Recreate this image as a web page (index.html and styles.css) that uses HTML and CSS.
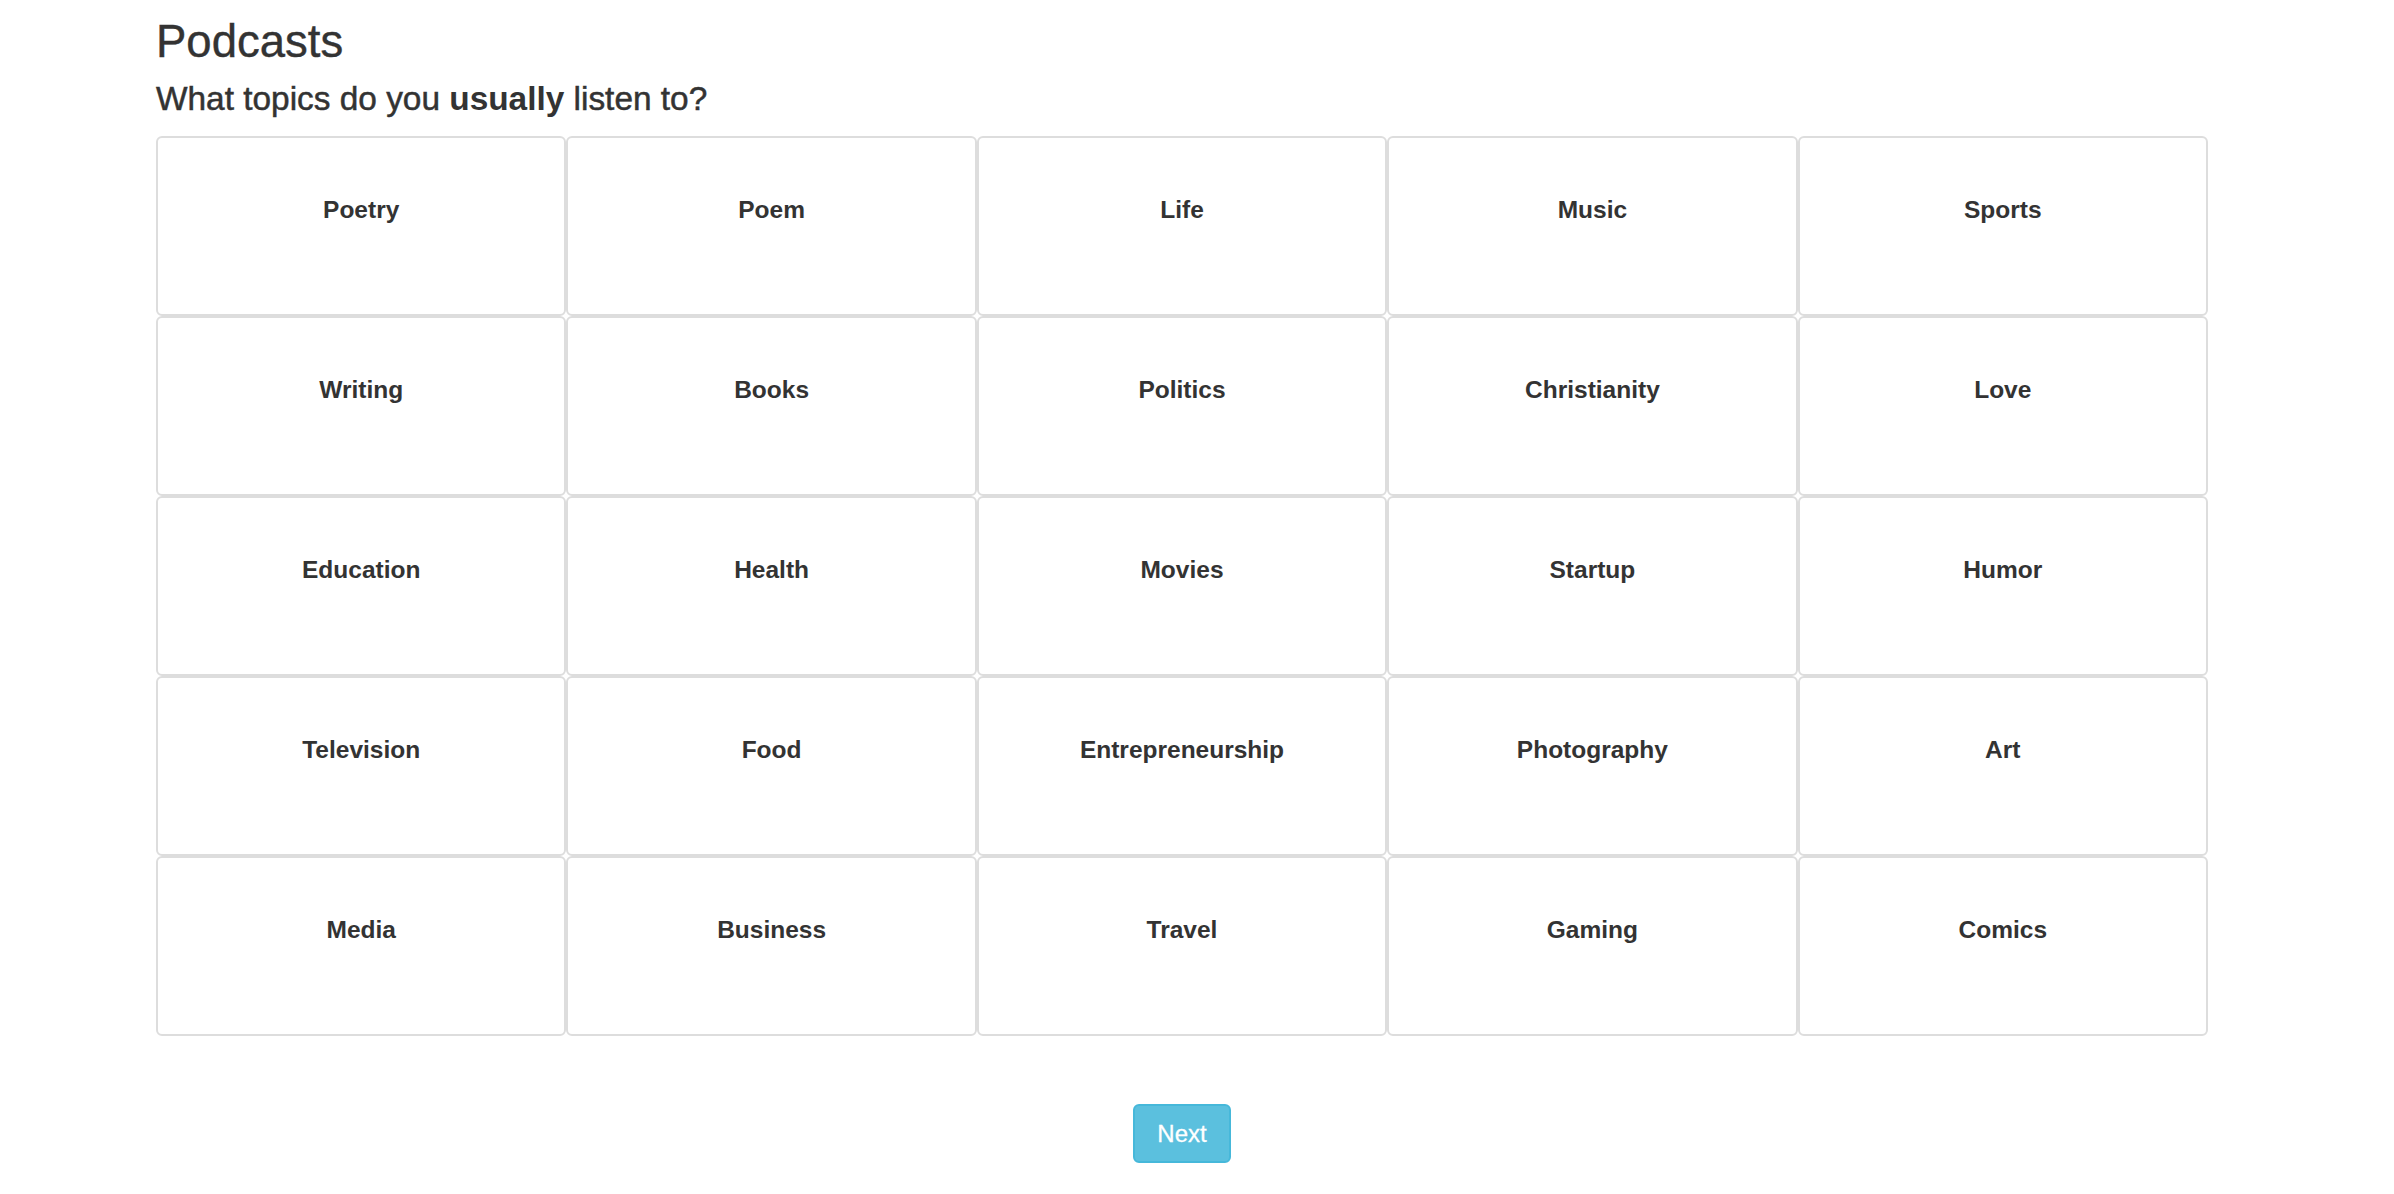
FILE: index.html
```html
<!DOCTYPE html>
<html lang="en">
<head>
<meta charset="utf-8">
<title>Podcasts</title>
<link rel="stylesheet" href="styles.css">
</head>
<body>
<main class="page">
  <h1 class="title">Podcasts</h1>
  <h2 class="subtitle">What topics do you <strong>usually</strong> listen to?</h2>
  <div class="topics">
    <div class="topic"><span>Poetry</span></div>
    <div class="topic"><span>Poem</span></div>
    <div class="topic"><span>Life</span></div>
    <div class="topic"><span>Music</span></div>
    <div class="topic"><span>Sports</span></div>
    <div class="topic"><span>Writing</span></div>
    <div class="topic"><span>Books</span></div>
    <div class="topic"><span>Politics</span></div>
    <div class="topic"><span>Christianity</span></div>
    <div class="topic"><span>Love</span></div>
    <div class="topic"><span>Education</span></div>
    <div class="topic"><span>Health</span></div>
    <div class="topic"><span>Movies</span></div>
    <div class="topic"><span>Startup</span></div>
    <div class="topic"><span>Humor</span></div>
    <div class="topic"><span>Television</span></div>
    <div class="topic"><span>Food</span></div>
    <div class="topic"><span>Entrepreneurship</span></div>
    <div class="topic"><span>Photography</span></div>
    <div class="topic"><span>Art</span></div>
    <div class="topic"><span>Media</span></div>
    <div class="topic"><span>Business</span></div>
    <div class="topic"><span>Travel</span></div>
    <div class="topic"><span>Gaming</span></div>
    <div class="topic"><span>Comics</span></div>
  </div>
  <div class="actions">
    <button class="btn-next" type="button">Next</button>
  </div>
</main>
</body>
</html>
```

FILE: styles.css
```css
html, body {
  margin: 0;
  padding: 0;
  background: #ffffff;
}

body {
  font-family: "Liberation Sans", Arial, Helvetica, sans-serif;
  color: #333333;
}

.page {
  width: 2052px;
  margin: 0 0 0 156px;
  display: flex;
  flex-direction: column;
}

.title {
  margin: 17px 0 0 0;
  font-size: 45.5px;
  line-height: 49px;
  font-weight: 400;
  color: #333333;
  -webkit-text-stroke: 0.4px #333333;
}

.subtitle {
  margin: 14px 0 0 0;
  font-size: 33.4px;
  line-height: 37px;
  font-weight: 400;
  color: #333333;
  -webkit-text-stroke: 0.5px #333333;
}

.subtitle strong {
  font-weight: 700;
  -webkit-text-stroke: 0;
}

.topics {
  margin-top: 19px;
  display: grid;
  grid-template-columns: repeat(5, 1fr);
  grid-auto-rows: 180px;
}

.topic {
  box-sizing: border-box;
  border: 2px solid #dddddd;
  border-radius: 6px;
  background: #ffffff;
  display: flex;
  justify-content: center;
  align-items: flex-start;
  padding-top: 58px;
}

.topic span {
  font-size: 24.5px;
  line-height: 27px;
  font-weight: 700;
  color: #333333;
}

.actions {
  display: flex;
  justify-content: center;
  margin-top: 68px;
}

.btn-next {
  box-sizing: border-box;
  height: 59px;
  padding: 0 22.5px;
  border: 2px solid #46b8da;
  border-radius: 6px;
  background: #5bc0de;
  color: #ffffff;
  font-family: "Liberation Sans", Arial, Helvetica, sans-serif;
  font-size: 24px;
  line-height: 55px;
  font-weight: 400;
  -webkit-text-stroke: 0.3px #ffffff;
  cursor: pointer;
}
```
